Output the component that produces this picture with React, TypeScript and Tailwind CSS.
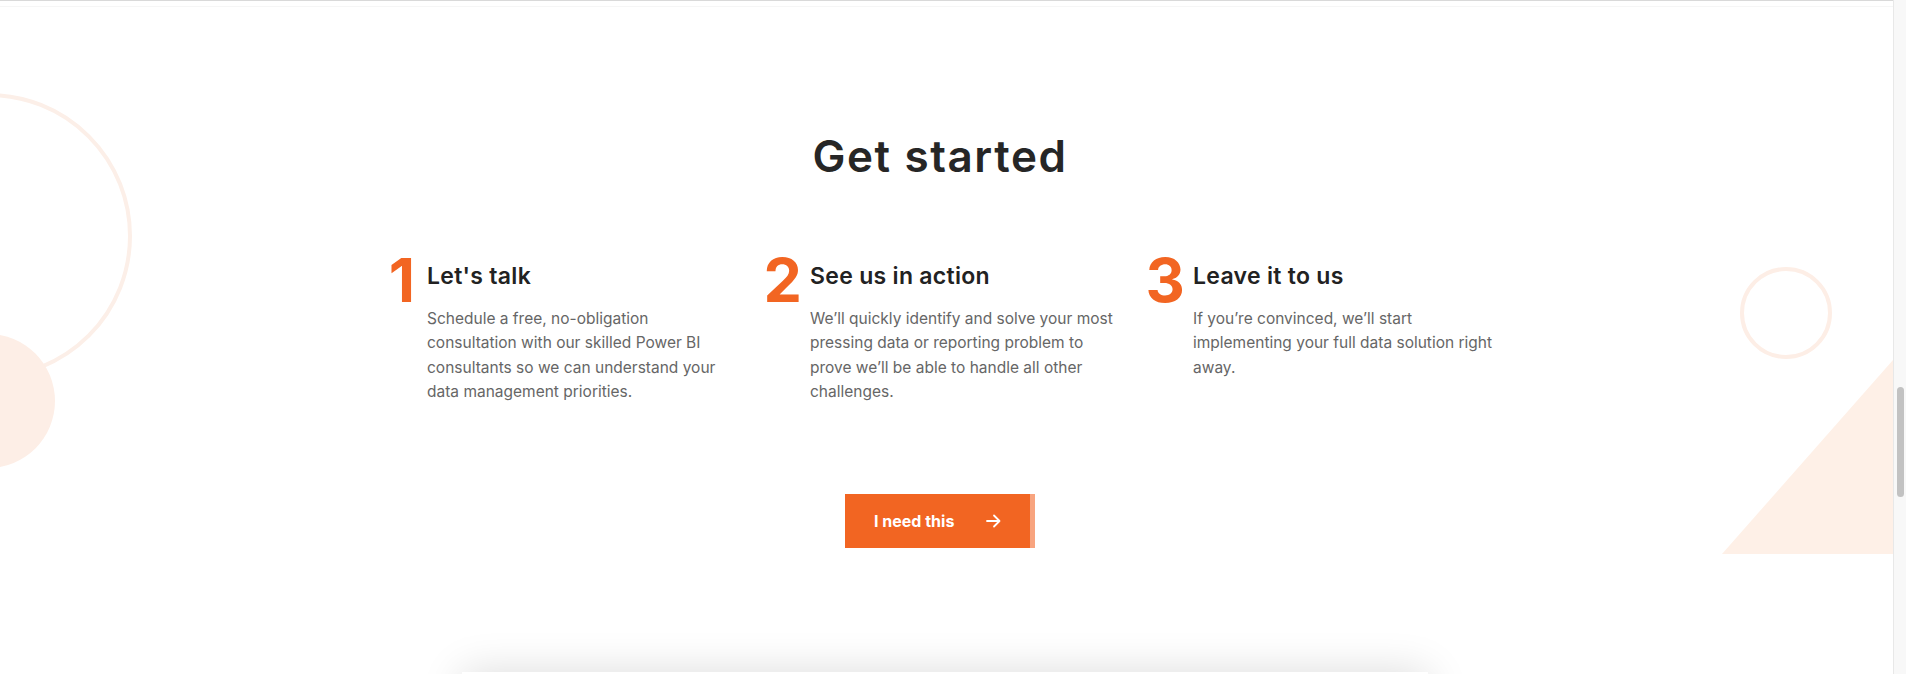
import React from "react";

const font = { fontFamily: "Inter, 'Noto Sans', sans-serif" } as React.CSSProperties;

function Step({ n, title, lines, numPad }: { n: string; title: string; lines: string[]; numPad: string }) {
  return (
    <div className="flex w-[383px] shrink-0">
      <div className={`w-[48px] shrink-0 text-right text-[61px] font-bold leading-[63px] text-[#f26522] tracking-[-1px] ${numPad}`}>
        {n}
      </div>
      <div className="flex flex-col">
        <div className="mt-[12px] text-[23px] font-semibold leading-[30px] tracking-[0.3px] text-[#222222] whitespace-nowrap">
          {title}
        </div>
        <div className="mt-[16px] text-[15.5px] leading-[24.4px] text-[#666666] whitespace-nowrap">
          {lines.map((l, i) => (
            <div key={i}>{l}</div>
          ))}
        </div>
      </div>
    </div>
  );
}

export default function App() {
  return (
    <div className="flex h-[674px] w-[1906px] overflow-hidden bg-white" style={font}>
      <main className="relative h-[674px] w-[1893px] shrink-0 overflow-hidden border-t border-[#d9d9d9]">
        {/* faint line */}
        <div className="absolute left-0 right-0 top-[5px] h-px bg-[#f6f6f6]" />
        {/* decorations */}
        <div className="absolute left-[-154px] top-[92px] h-[286px] w-[286px] rounded-full border-[4px] border-[#fcefe8]" />
        <div className="absolute left-[-79px] top-[333px] h-[134px] w-[134px] rounded-full bg-[#fdeee6]" />
        <div className="absolute left-[1740px] top-[266px] h-[92px] w-[92px] rounded-full border-[4px] border-[#fdeee6]" />
        <svg className="absolute left-[1722px] top-[359px]" width="171" height="195" viewBox="0 0 171 195">
          <polygon points="0,194 171,0 171,194" fill="#fef0e7" />
        </svg>

        <div className="relative flex flex-col">
          <div className="w-[1880px] pt-[129px] text-center text-[44px] font-semibold leading-[53px] text-[#262626] tracking-[1.6px]">
            Get started
          </div>
          <div className="mt-[66px] flex pl-[379px]">
            <Step
              n="1"
              numPad="pr-[13px]"
              title="Let's talk"
              lines={[
                "Schedule a free, no-obligation",
                "consultation with our skilled Power BI",
                "consultants so we can understand your",
                "data management priorities.",
              ]}
            />
            <Step
              n="2"
              numPad="pr-[9px]"
              title="See us in action"
              lines={[
                "We’ll quickly identify and solve your most",
                "pressing data or reporting problem to",
                "prove we’ll be able to handle all other",
                "challenges.",
              ]}
            />
            <Step
              n="3"
              numPad="pr-[9px]"
              title="Leave it to us"
              lines={[
                "If you’re convinced, we’ll start",
                "implementing your full data solution right",
                "away.",
              ]}
            />
          </div>
          <div className="mt-[89px] flex w-[1880px] justify-center">
            <div className="flex h-[54px]">
              <button className="flex h-[54px] w-[185px] items-center bg-[#f26522] pl-[29px] text-[16px] font-bold text-white">
                <span>I need this</span>
                <svg className="ml-[32px]" width="15" height="14" viewBox="0 0 15 14" fill="none" stroke="white" strokeWidth="1.8" strokeLinecap="round" strokeLinejoin="round">
                  <path d="M1 7h12.5M8 1.5 13.5 7 8 12.5" />
                </svg>
              </button>
              <div className="h-[54px] w-[5px] bg-[#f8a47f]" />
            </div>
          </div>
          <div className="ml-[462px] mt-[124px] h-[200px] w-[966px] bg-white shadow-[0_0_40px_rgba(0,0,0,0.14)]" />
        </div>
      </main>
      <div className="relative h-[674px] w-[13px] shrink-0 border-l border-[#e8e8e8] bg-[#f8f8f8]">
        <div className="absolute left-[3px] top-[387px] h-[110px] w-[7px] rounded-full bg-[#c2c2c2]" />
      </div>
    </div>
  );
}
